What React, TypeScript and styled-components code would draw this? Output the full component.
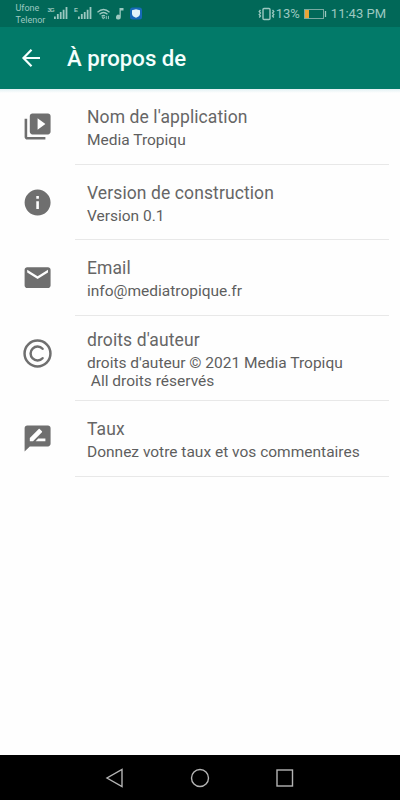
import React from "react";
import styled, { createGlobalStyle } from "styled-components";

const GlobalStyle = createGlobalStyle`
  * { box-sizing: border-box; }
  body { margin: 0; background: #fff; font-family: Roboto, "Noto Sans", sans-serif; }
  svg { display: block; flex: none; }
`;

const Screen = styled.div`
  width: 400px;
  height: 800px;
  display: flex;
  flex-direction: column;
  background: #fefefe;
  overflow: hidden;
`;

const StatusBar = styled.header`
  height: 27px;
  flex: none;
  display: flex;
  align-items: center;
  justify-content: space-between;
  padding: 0 14px 0 15.500px;
  background: #016858;
  color: #9cc8c0;
`;

const StatusGroup = styled.div`
  display: flex;
  align-items: center;
`;

const Carriers = styled.div`
  width: 31px;
  margin-top: 1px;
  font-size: 9px;
  line-height: 12px;
  white-space: nowrap;
`;

const StatusText = styled.span<{ $gap: number }>`
  font-size: 13px;
  line-height: 16px;
  margin-left: ${(p) => p.$gap}px;
  padding-top: 1px;
  white-space: nowrap;
`;

const Toolbar = styled.div`
  height: 62px;
  flex: none;
  display: flex;
  align-items: center;
  padding-left: 16px;
  background: #027a69;
  color: #f4fffd;
`;

const Title = styled.h1`
  margin: 0 0 0 21px;
  font-size: 22.200px;
  line-height: 28px;
  font-weight: 500;
`;

const List = styled.main`
  flex: 1;
  background: linear-gradient(#e2f0f4, #fefefe 4px);
`;

const Row = styled.section<{ $height: number }>`
  height: ${(p) => p.$height}px;
  display: flex;
`;

const IconCell = styled.div<{ $raise: number }>`
  width: 75px;
  display: flex;
  align-items: center;
  justify-content: center;
  padding-bottom: ${(p) => p.$raise}px;
  color: #6f6f6f;
`;

const Body = styled.div`
  width: 314px;
  padding: 2px 0 0 12px;
  display: flex;
  flex-direction: column;
  justify-content: center;
  border-bottom: 1px solid #e8e8e8;
  color: #666;
`;

const Label = styled.div`
  font-size: 17.500px;
  line-height: 22px;
  letter-spacing: 0.1px;
  white-space: nowrap;
`;

const Detail = styled.div`
  color: #5e5e5e;
  font-size: 15.500px;
  line-height: 18px;
  padding-top: 3px;
  white-space: pre;
`;

const NavBar = styled.footer`
  height: 45px;
  flex: none;
  display: flex;
  align-items: center;
  justify-content: center;
  gap: 65px;
  background: #000;
`;

const Signal = () => (
  <svg width="14" height="12" viewBox="0 0 14 12" fill="currentColor">
    <path d="M0 9.500h1.800V12H0zM2.900 7h1.800v5H2.900zM5.800 5h1.800v7H5.800zM8.700 2.800h1.800V12H8.700zM11.600 0h1.800v12h-1.800z" />
  </svg>
);

const SignalBlock = styled.div<{ $gap: number }>`
  display: flex;
  align-items: flex-start;
  margin: -1px 0 0 ${(p) => p.$gap}px;
`;

const Network = styled.span<{ $width: number }>`
  width: ${(p) => p.$width}px;
  font-family: "Liberation Sans", sans-serif;
  font-size: 6px;
  letter-spacing: -0.8px;
  line-height: 7px;
  font-weight: 700;
`;

const WifiIcon = styled.svg`
  margin-left: 5px;
`;

const NoteIcon = styled.svg`
  margin-left: 6px;
`;

const ShieldIcon = styled.svg`
  margin-left: 6px;
`;

const BatteryIcon = styled.svg`
  margin-left: 4px;
`;

const glyphs = {
  library:
    "M4 6H2v14c0 1.100.9 2 2 2h14v-2H4V6zm16-4H8c-1.100 0-2 .9-2 2v12c0 1.100.9 2 2 2h12c1.100 0 2-.9 2-2V4c0-1.100-.9-2-2-2zm-8 12.500v-9l6 4.500-6 4.500z",
  info: "M12 2a10 10 0 1 0 0 20 10 10 0 0 0 0-20zm1 15h-2v-6h2v6zm0-8h-2V7h2v2z",
  mail: "M20 4H4c-1.100 0-1.990.9-1.990 2L2 18c0 1.100.9 2 2 2h16c1.100 0 2-.9 2-2V6c0-1.100-.9-2-2-2zm0 4l-8 5-8-5V6l8 5 8-5v2z",
  review:
    "M20 2H4c-1.100 0-1.990.9-1.990 2L2 22l4-4h14c1.100 0 2-.9 2-2V4c0-1.100-.9-2-2-2zM6 14v-2.470l6.880-6.880c.2-.2.510-.2.710 0l1.770 1.770c.2.2.2.510 0 .710L8.470 14H6zm12 0h-7.500l2-2H18v2z",
};

const CopyrightGlyph = () => (
  <svg width="29" height="29" viewBox="0 0 28 28" fill="none" stroke="currentColor" strokeWidth="2.400">
    <circle cx="14" cy="14" r="12.500" />
    <path d="M18.900 9.400A6.700 6.700 0 1 0 18.900 18.600" strokeLinecap="round" />
  </svg>
);

type Item = {
  icon: keyof typeof glyphs | "copyright";
  height: number;
  label: string;
  detail: string;
  iconRaise?: number;
};

const items: Item[] = [
  { icon: "library", height: 76, label: "Nom de l'application", detail: "Media Tropiqu" },
  { icon: "info", height: 75, label: "Version de construction", detail: "Version 0.1" },
  { icon: "mail", height: 76, label: "Email", detail: "info@mediatropique.fr" },
  {
    icon: "copyright",
    height: 85,
    label: "droits d'auteur",
    detail: "droits d'auteur © 2021 Media Tropiqu\n All droits réservés",
    iconRaise: 11,
  },
  { icon: "review", height: 76, label: "Taux", detail: "Donnez votre taux et vos commentaires" },
];

const RowIcon = ({ name }: { name: Item["icon"] }) =>
  name === "copyright" ? (
    <CopyrightGlyph />
  ) : (
    <svg width="31.200" height="31.200" viewBox="0 0 24 24" fill="currentColor">
      <path d={glyphs[name]} />
    </svg>
  );

export default function App() {
  return (
    <Screen>
      <GlobalStyle />
      <StatusBar>
        <StatusGroup>
          <Carriers>
            <div>Ufone</div>
            <div>Telenor</div>
          </Carriers>
          <SignalBlock $gap={1}>
            <Network $width={6.5}>3G</Network>
            <Signal />
          </SignalBlock>
          <SignalBlock $gap={6}>
            <Network $width={4}>E</Network>
            <Signal />
          </SignalBlock>
          <WifiIcon width="13" height="12" viewBox="0 0 14 12" fill="none" stroke="currentColor" strokeWidth="1.400">
            <path d="M.5 4Q7-1.800 13.500 4M2.700 6.300Q7 2.500 11.300 6.300M4.900 8.500Q7 6.700 8.500 8" />
            <path d="M5.400 9.300h3L6.900 11.500zM10 8v3.500M12.300 8v3.500" strokeWidth="1" />
          </WifiIcon>
          <NoteIcon width="8" height="12" viewBox="0 0 8 12" fill="currentColor">
            <path d="M3.500 0H7.500V2.600H4.800V9A2.400 2.400 0 1 1 3.500 7z" />
          </NoteIcon>
          <ShieldIcon width="12" height="13" viewBox="0 0 12 13">
            <rect y=".5" width="12" height="12" rx="2.500" fill="#1769b8" />
            <path d="M6 2.300L10 3.200V7Q9.700 9.500 6 10.800Q2.300 9.500 2 7V3.200z" fill="#e3f5fa" />
          </ShieldIcon>
        </StatusGroup>
        <StatusGroup>
          <svg width="17" height="14" viewBox="0 0 17 14" fill="none" stroke="currentColor">
            <rect x="5" y="1.500" width="7" height="11" rx="1" strokeWidth="1.400" />
            <path d="M2.500 3L1.200 4.500 2.500 6 1.200 7.500 2.500 9 1.200 10.500M14.500 3l1.300 1.500L14.500 6l1.300 1.500L14.500 9l1.300 1.500" strokeWidth="1.300" />
          </svg>
          <StatusText $gap={1}>13%</StatusText>
          <BatteryIcon width="23" height="10" viewBox="0 0 23 10" fill="none">
            <rect x=".5" y=".5" width="19" height="9" stroke="#79aaa1" />
            <path d="M1 1h4v8H1z" fill="#e9a536" />
            <path d="M21.500 2v6" stroke="#9cc8c0" strokeWidth="1.300" />
          </BatteryIcon>
          <StatusText $gap={4}>11:43 PM</StatusText>
        </StatusGroup>
      </StatusBar>
      <Toolbar>
        <svg width="30" height="30" viewBox="0 0 30 30" fill="none" stroke="currentColor" strokeWidth="2.200">
          <path d="M24 15H8M15.500 6.800L7.500 15l8 8.200" />
        </svg>
        <Title>À propos de</Title>
      </Toolbar>
      <List>
        {items.map((item) => (
          <Row key={item.icon} $height={item.height}>
            <IconCell $raise={item.iconRaise ?? 0}>
              <RowIcon name={item.icon} />
            </IconCell>
            <Body>
              <Label>{item.label}</Label>
              <Detail>{item.detail}</Detail>
            </Body>
          </Row>
        ))}
      </List>
      <NavBar>
        <svg width="20" height="20" viewBox="0 0 20 20" fill="none" stroke="#b4b4b4" strokeWidth="1.400">
          <path d="M17 1.500V18.500L2 10z" />
        </svg>
        <svg width="20" height="20" viewBox="0 0 20 20" fill="none" stroke="#b4b4b4" strokeWidth="1.400">
          <circle cx="10" cy="10" r="8.500" />
        </svg>
        <svg width="20" height="20" viewBox="0 0 20 20" fill="none" stroke="#b4b4b4" strokeWidth="1.400">
          <rect x="2" y="2" width="15.500" height="16" />
        </svg>
      </NavBar>
    </Screen>
  );
}
